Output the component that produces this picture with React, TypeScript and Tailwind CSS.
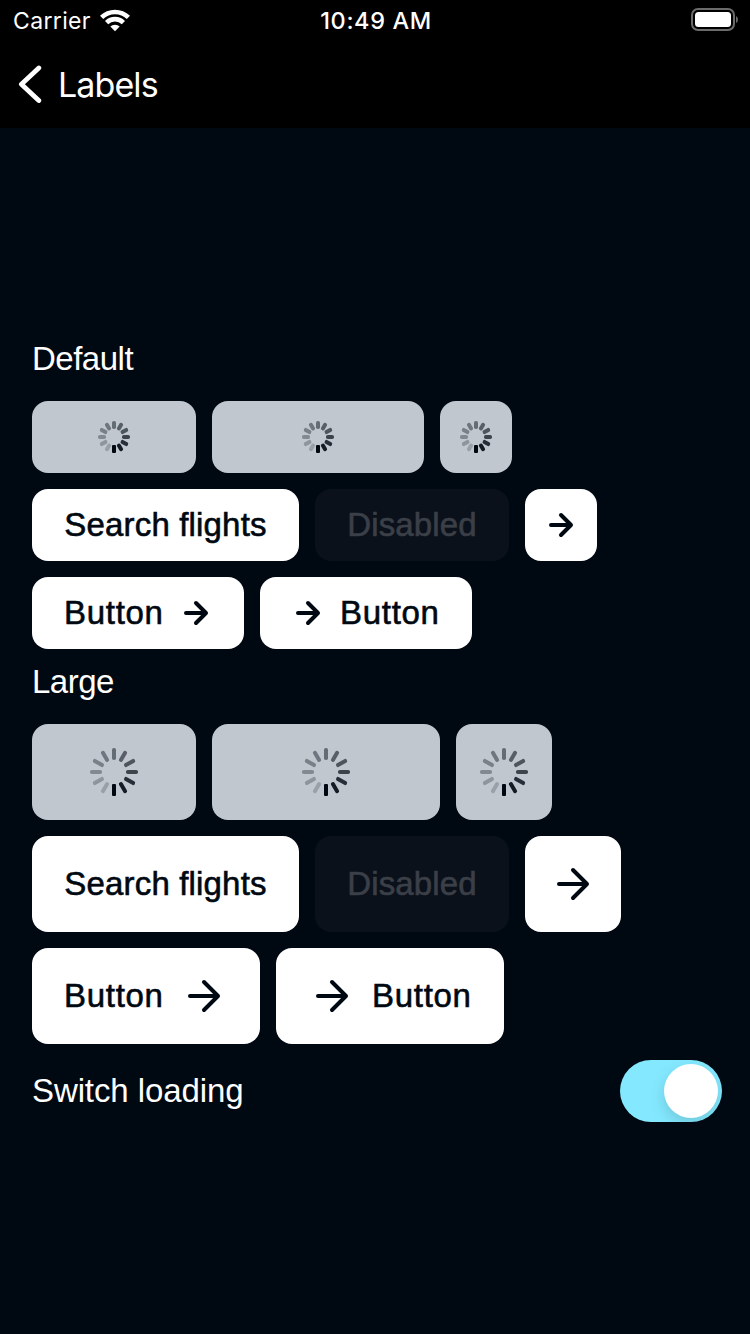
import React from "react";

type Size = "default" | "large";

const heights: Record<Size, string> = { default: "h-[72px]", large: "h-24" };
const squares: Record<Size, string> = { default: "w-[72px]", large: "w-24" };

function Arrow({ size }: { size: Size }) {
  return size === "default" ? (
    <svg className="h-8 w-8 shrink-0" viewBox="0 0 32 32" fill="none" stroke="currentColor" strokeWidth="4" strokeLinecap="round" strokeLinejoin="round">
      <path d="M6 16H25.3M16 6L26 16L16 26" />
    </svg>
  ) : (
    <svg className="h-12 w-12 shrink-0" viewBox="0 0 48 48" fill="none" stroke="currentColor" strokeWidth="4" strokeLinecap="round" strokeLinejoin="round">
      <path d="M10 24H37.3M24 10L38 24L24 38" />
    </svg>
  );
}

const opacities = [0.48, 0.54, 0.6, 0.69, 0.8, 0.9, 1, 0.2, 0.26, 0.32, 0.37, 0.42];

function Spinner({ size }: { size: Size }) {
  const outer = size === "default" ? 16 : 24;
  const inner = outer / 2;
  return (
    <svg className={size === "default" ? "h-8 w-8" : "h-12 w-12"} viewBox={`${-outer} ${-outer} ${outer * 2} ${outer * 2}`}>
      {opacities.map((o, i) => (
        <rect key={i} x={-2} y={-outer} width={4} height={outer - inner} rx={i === 6 ? 1 : 1.8} fill="#000811" opacity={o} transform={`rotate(${i * 30})`} />
      ))}
    </svg>
  );
}

function Loading({ size, width }: { size: Size; width: string }) {
  return (
    <button className={`flex items-center justify-center rounded-[16px] bg-[#c0c7cf] ${heights[size]} ${width}`}>
      <Spinner size={size} />
    </button>
  );
}

function Solid({ size, width, children }: { size: Size; width: string; children: React.ReactNode }) {
  return (
    <button className={`flex items-center justify-center gap-4 rounded-[16px] bg-white text-[#000811] ${heights[size]} ${width}`}>
      {children}
    </button>
  );
}

function ButtonLabel() {
  return <span className="w-[100px] whitespace-nowrap text-left tracking-[0.7px] [-webkit-text-stroke:0.6px]">Button</span>;
}

function Group({ title, size }: { title: string; size: Size }) {
  const large = size === "large";
  const wide = large ? "w-[228px]" : "w-[212px]";
  return (
    <section className="flex flex-col">
      <h2 className="h-[42px] leading-[34px] tracking-[-0.5px] text-white">{title}</h2>
      <div className="mt-[17px] flex flex-col gap-4">
        <div className="flex gap-4">
          <Loading size={size} width="w-[164px]" />
          <Loading size={size} width={wide} />
          <Loading size={size} width={squares[size]} />
        </div>
        <div className="flex gap-4">
          <Solid size={size} width="w-[267px]">
            <span className="whitespace-nowrap tracking-[0.17px] [-webkit-text-stroke:0.6px]">Search flights</span>
          </Solid>
          <button disabled className={`flex w-[194px] items-center justify-center rounded-[16px] bg-[#0a111b] text-[#3b3f47] ${heights[size]}`}>
            <span className="tracking-[0.15px] [-webkit-text-stroke:0.6px]">Disabled</span>
          </button>
          <Solid size={size} width={squares[size]}>
            <Arrow size={size} />
          </Solid>
        </div>
        <div className="flex gap-4">
          <Solid size={size} width={wide}>
            <ButtonLabel />
            <Arrow size={size} />
          </Solid>
          <Solid size={size} width={wide}>
            <Arrow size={size} />
            <ButtonLabel />
          </Solid>
        </div>
      </div>
    </section>
  );
}

export default function App() {
  return (
    <div className="flex h-[1334px] w-[750px] flex-col overflow-hidden bg-[#000811] font-['Liberation_Sans',Arial,sans-serif] text-[33px] leading-[38px]">
      <header className="h-32 bg-black text-white">
        <div className="grid h-10 grid-cols-3 items-center pl-[13px] pr-[11px] font-[Inter,sans-serif] text-[23px] leading-[40px]">
          <div className="flex items-center gap-[9px]">
            <span className="pt-[2px] leading-[38px] tracking-[0.35px]">Carrier</span>
            <svg className="h-[23px] w-[30px]" viewBox="0 0 30 23" fill="none" stroke="white" strokeWidth="4.6">
              <path d="M1.6 8.4A19.2 19.2 0 0 1 28.4 8.4" />
              <path d="M6.6 13.6A12 12 0 0 1 23.4 13.6" />
              <path d="M10.3 17.6A6.6 6.6 0 0 1 19.7 17.6L15 22.2Z" fill="white" stroke="none" />
            </svg>
          </div>
          <span className="whitespace-nowrap pt-[2px] text-center text-[23.5px] font-medium leading-[38px] tracking-[0.6px]">10:49 AM</span>
          <svg className="h-[24px] w-[48px] justify-self-end" viewBox="0 0 48 24">
            <rect x="1" y="1" width="42" height="21" rx="6" fill="none" stroke="#6b6b6b" strokeWidth="2" />
            <rect x="4" y="4" width="36" height="15" rx="3.5" fill="white" />
            <path d="M45 8Q47 9 47 11.5T45 15Z" fill="#6b6b6b" />
          </svg>
        </div>
        <div className="flex h-[88px] items-center pl-[18px]">
          <svg className="h-[40px] w-[24px]" viewBox="0 0 24 40" fill="none" stroke="white" strokeWidth="4.8" strokeLinecap="round" strokeLinejoin="round">
            <path d="M20.8 4L3.4 20.2L20.8 36.5" />
          </svg>
          <h1 className="ml-[16px] pt-[2px] font-[Inter,sans-serif] text-[34px] font-normal leading-[42px] tracking-[-0.9px]">Labels</h1>
        </div>
      </header>
      <main className="flex flex-col gap-4 pl-8 pr-7 pt-[214px]">
        <Group title="Default" size="default" />
        <Group title="Large" size="large" />
        <div className="flex h-[62px] items-center justify-between text-white">
          <span className="tracking-[-0.1px]">Switch loading</span>
          <button role="switch" aria-checked="true" aria-label="Switch loading" className="flex h-[62px] w-[102px] items-center justify-end overflow-hidden rounded-full bg-[#84e9ff] pr-1">
            <span className="h-[54px] w-[54px] rounded-full bg-white shadow-[0_6px_16px_rgba(0,0,0,0.15)]" />
          </button>
        </div>
      </main>
    </div>
  );
}
